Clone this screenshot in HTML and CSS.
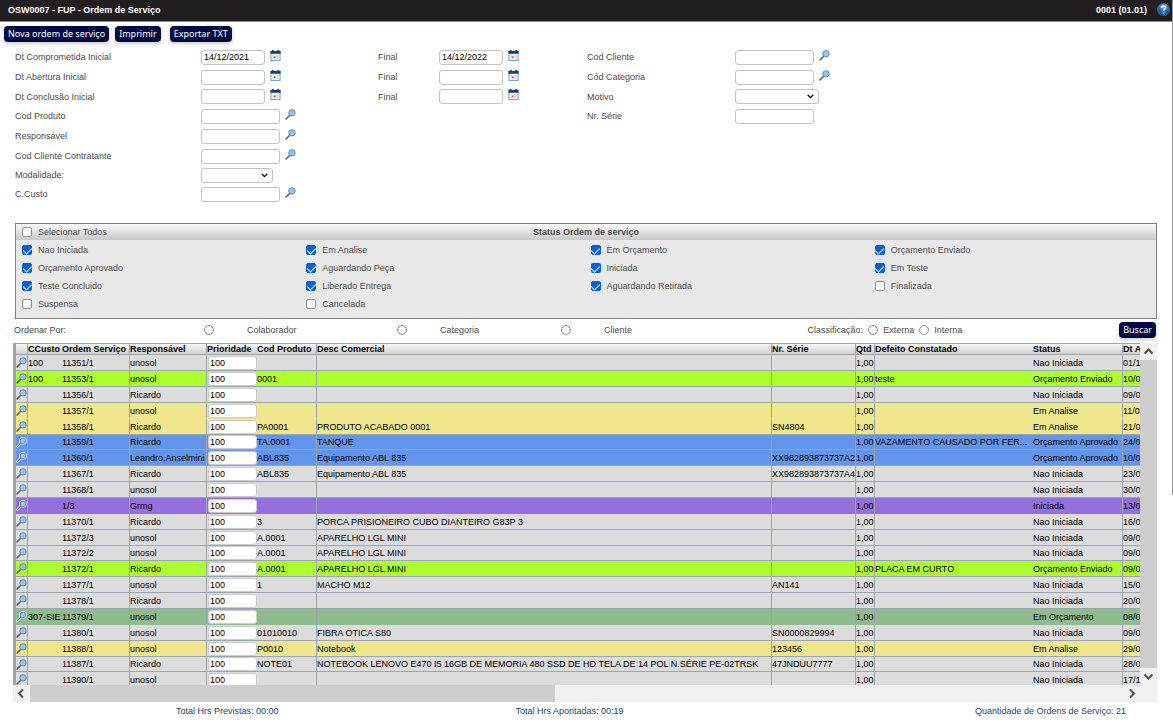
FILE: index.html
```html
<!DOCTYPE html>
<html lang="pt-BR">
<head>
<meta charset="utf-8">
<title>OSW0007 - FUP - Ordem de Serviço</title>
<link rel="stylesheet" href="styles.css">
</head>
<body>
<svg class="sprite" aria-hidden="true">
  <symbol id="lens" viewBox="0 0 12 12">
    <path d="M1.2 10.8 5.2 6.8" stroke="#6b6b5c" stroke-width="1.8" stroke-linecap="round"/>
    <circle cx="7.6" cy="4.2" r="3.5" fill="#8fc4ff" stroke="#6a7f98" stroke-width="1"/>
  </symbol>
  <symbol id="lens-halo" viewBox="0 0 12 12">
    <path d="M1.4 10.6 5.2 6.8" stroke="#e4e4dc" stroke-width="2.6" stroke-linecap="round"/>
    <circle cx="7.6" cy="4.2" r="4.1" fill="#dfe6ec"/>
    <path d="M1.4 10.6 5.2 6.8" stroke="#77776c" stroke-width="1.2"/>
    <circle cx="7.6" cy="4.2" r="3.1" fill="#8fc4ff" stroke="#6a7f98" stroke-width=".8"/>
  </symbol>
  <symbol id="calendar" viewBox="0 0 12 12">
    <rect x="1" y="1.5" width="10" height="10" fill="#eaf2f4" stroke="#6e9cc8"/>
    <path d="M.5 1h11v3H.5zM2 0h2v2H2zM8 0h2v2H8z" fill="#173f77"/>
    <path d="M4 7h2v2H4z" fill="#ee3b3b"/>
    <path d="M6.5 5.5h3v4h-3z" fill="#d5e5e4"/>
  </symbol>
</svg>

<header class="topbar">
  <h1>OSW0007 - FUP - Ordem de Serviço</h1>
  <span class="version">0001 (01.01)</span>
  <button class="help" type="button" aria-label="Ajuda">
    <svg viewBox="0 0 13 13"><defs><radialGradient id="g" cx=".5" cy=".25" r=".8"><stop offset="0" stop-color="#6fb0ee"/><stop offset=".6" stop-color="#1c61b8"/><stop offset="1" stop-color="#0c3f8c"/></radialGradient></defs><circle cx="6.5" cy="6.5" r="6" fill="url(#g)" stroke="#3f7fc8" stroke-width=".6"/><path d="M4.6 5c0-2.6 4-2.5 4-.3 0 1.4-2 1.5-2 3M6.6 9v1.5" fill="none" stroke="#fff" stroke-width="1.5"/></svg>
  </button>
</header>

<main class="page">
  <div class="toolbar">
    <button class="btn" type="button">Nova ordem de serviço</button>
    <button class="btn" type="button">Imprimir</button>
    <button class="btn btn-apart" type="button">Exportar TXT</button>
  </div>

  <form class="filters">
    <div class="filter-col">
      <div class="field"><label for="f1">Dt Comprometida Inicial</label><input class="box date" id="f1" value="14/12/2021"><svg class="ico"><use href="#calendar"/></svg></div>
      <div class="field"><label for="f2">Dt Abertura Inicial</label><input class="box date" id="f2"><svg class="ico"><use href="#calendar"/></svg></div>
      <div class="field"><label for="f3">Dt Conclusão Inicial</label><input class="box date" id="f3"><svg class="ico"><use href="#calendar"/></svg></div>
      <div class="field"><label for="f4">Cod Produto</label><input class="box" id="f4"><svg class="ico"><use href="#lens"/></svg></div>
      <div class="field"><label for="f5">Responsável</label><input class="box" id="f5"><svg class="ico"><use href="#lens"/></svg></div>
      <div class="field"><label for="f6">Cod Cliente Contratante</label><input class="box" id="f6"><svg class="ico"><use href="#lens"/></svg></div>
      <div class="field field-low"><label for="f7">Modalidade:</label><select class="box sel-short" id="f7"><option></option></select></div>
      <div class="field"><label for="f8">C.Custo</label><input class="box" id="f8"><svg class="ico"><use href="#lens"/></svg></div>
    </div>
    <div class="filter-col filter-end">
      <div class="field"><label for="e1">Final</label><input class="box date" id="e1" value="14/12/2022"><svg class="ico"><use href="#calendar"/></svg></div>
      <div class="field"><label for="e2">Final</label><input class="box date" id="e2"><svg class="ico"><use href="#calendar"/></svg></div>
      <div class="field"><label for="e3">Final</label><input class="box date" id="e3"><svg class="ico"><use href="#calendar"/></svg></div>
    </div>
    <div class="filter-col filter-client">
      <div class="field"><label for="c1">Cod Cliente</label><input class="box" id="c1"><svg class="ico"><use href="#lens"/></svg></div>
      <div class="field"><label for="c2">Cód Categoria</label><input class="box" id="c2"><svg class="ico"><use href="#lens"/></svg></div>
      <div class="field"><label for="c3">Motivo</label><select class="box sel-long" id="c3"><option></option></select></div>
      <div class="field"><label for="c4">Nr. Série</label><input class="box" id="c4"></div>
    </div>
  </form>

  <section class="status">
    <div class="status-head">
      <label class="check"><input type="checkbox">Selecionar Todos</label>
      <h2>Status Ordem de serviço</h2>
    </div>
    <div class="status-grid">
      <label class="check"><input type="checkbox" checked>Nao Iniciada</label>
      <label class="check"><input type="checkbox" checked>Em Analise</label>
      <label class="check"><input type="checkbox" checked>Em Orçamento</label>
      <label class="check"><input type="checkbox" checked>Orçamento Enviado</label>
      <label class="check"><input type="checkbox" checked>Orçamento Aprovado</label>
      <label class="check"><input type="checkbox" checked>Aguardando Peça</label>
      <label class="check"><input type="checkbox" checked>Iniciada</label>
      <label class="check"><input type="checkbox" checked>Em Teste</label>
      <label class="check"><input type="checkbox" checked>Teste Concluido</label>
      <label class="check"><input type="checkbox" checked>Liberado Entrega</label>
      <label class="check"><input type="checkbox" checked>Aguardando Retirada</label>
      <label class="check"><input type="checkbox">Finalizada</label>
      <label class="check"><input type="checkbox">Suspensa</label>
      <label class="check"><input type="checkbox">Cancelada</label>
    </div>
  </section>

  <div class="order">
    <span class="order-title">Ordenar Por:</span>
    <label class="order-opt order-first"><input type="radio" name="ord">Colaborador</label>
    <label class="order-opt order-mid"><input type="radio" name="ord">Categoria</label>
    <label class="order-opt"><input type="radio" name="ord">Cliente</label>
    <div class="class-opts">
      <span>Classificação:</span>
      <label><input type="radio" name="cls">Externa</label>
      <label><input type="radio" name="cls">Interna</label>
    </div>
    <button class="btn" type="button">Buscar</button>
  </div>

  <section class="grid">
    <div class="viewport">
      <table class="orders">
        <colgroup><col class="w-ico"><col class="w-cc"><col class="w-os"><col class="w-resp"><col class="w-pri"><col class="w-cod"><col class="w-desc"><col class="w-ns"><col class="w-qtd"><col class="w-def"><col class="w-st"><col class="w-dt"></colgroup>
        <thead><tr><th></th><th>CCusto</th><th>Ordem Serviço</th><th>Responsável</th><th>Prioridade</th><th>Cod Produto</th><th>Desc Comercial</th><th>Nr. Série</th><th>Qtd</th><th>Defeito Constatado</th><th>Status</th><th>Dt A</th></tr></thead>
        <tbody>
          <tr><td><svg><use href="#lens"/></svg></td><td>100</td><td>11351/1</td><td>unosol</td><td><input aria-label="Prioridade" value="100"></td><td></td><td></td><td></td><td>1,00</td><td></td><td>Nao Iniciada</td><td>01/1</td></tr>
          <tr class="sent"><td><svg><use href="#lens"/></svg></td><td>100</td><td>11353/1</td><td>unosol</td><td><input aria-label="Prioridade" value="100"></td><td>0001</td><td></td><td></td><td>1,00</td><td>teste</td><td>Orçamento Enviado</td><td>10/0</td></tr>
          <tr><td><svg><use href="#lens"/></svg></td><td></td><td>11356/1</td><td>Ricardo</td><td><input aria-label="Prioridade" value="100"></td><td></td><td></td><td></td><td>1,00</td><td></td><td>Nao Iniciada</td><td>09/0</td></tr>
          <tr class="analysis joined"><td><svg><use href="#lens"/></svg></td><td></td><td>11357/1</td><td>unosol</td><td><input aria-label="Prioridade" value="100"></td><td></td><td></td><td></td><td>1,00</td><td></td><td>Em Analise</td><td>11/0</td></tr>
          <tr class="analysis"><td><svg><use href="#lens"/></svg></td><td></td><td>11358/1</td><td>Ricardo</td><td><input aria-label="Prioridade" value="100"></td><td>PA0001</td><td>PRODUTO ACABADO 0001</td><td>SN4804</td><td>1,00</td><td></td><td>Em Analise</td><td>21/0</td></tr>
          <tr class="approved"><td><svg><use href="#lens-halo"/></svg></td><td></td><td>11359/1</td><td>Ricardo</td><td><input aria-label="Prioridade" value="100"></td><td>TA.0001</td><td>TANQUE</td><td></td><td>1,00</td><td>VAZAMENTO CAUSADO POR FER...</td><td>Orçamento Aprovado</td><td>24/0</td></tr>
          <tr class="approved"><td><svg><use href="#lens-halo"/></svg></td><td></td><td>11360/1</td><td>Leandro.Anselmini</td><td><input aria-label="Prioridade" value="100"></td><td>ABL835</td><td>Equipamento ABL 835</td><td>XX982893873737A2</td><td>1,00</td><td></td><td>Orçamento Aprovado</td><td>10/0</td></tr>
          <tr><td><svg><use href="#lens"/></svg></td><td></td><td>11367/1</td><td>Ricardo</td><td><input aria-label="Prioridade" value="100"></td><td>ABL835</td><td>Equipamento ABL 835</td><td>XX982893873737A4</td><td>1,00</td><td></td><td>Nao Iniciada</td><td>23/0</td></tr>
          <tr><td><svg><use href="#lens"/></svg></td><td></td><td>11368/1</td><td>unosol</td><td><input aria-label="Prioridade" value="100"></td><td></td><td></td><td></td><td>1,00</td><td></td><td>Nao Iniciada</td><td>30/0</td></tr>
          <tr class="started joined"><td><svg><use href="#lens-halo"/></svg></td><td></td><td>1/3</td><td>Grmg</td><td><input aria-label="Prioridade" value="100"></td><td></td><td></td><td></td><td>1,00</td><td></td><td>Iniciada</td><td>13/0</td></tr>
          <tr><td><svg><use href="#lens"/></svg></td><td></td><td>11370/1</td><td>Ricardo</td><td><input aria-label="Prioridade" value="100"></td><td>3</td><td>PORCA PRISIONEIRO CUBO DIANTEIRO G83P 3</td><td></td><td>1,00</td><td></td><td>Nao Iniciada</td><td>16/0</td></tr>
          <tr><td><svg><use href="#lens"/></svg></td><td></td><td>11372/3</td><td>unosol</td><td><input aria-label="Prioridade" value="100"></td><td>A.0001</td><td>APARELHO LGL MINI</td><td></td><td>1,00</td><td></td><td>Nao Iniciada</td><td>09/0</td></tr>
          <tr><td><svg><use href="#lens"/></svg></td><td></td><td>11372/2</td><td>unosol</td><td><input aria-label="Prioridade" value="100"></td><td>A.0001</td><td>APARELHO LGL MINI</td><td></td><td>1,00</td><td></td><td>Nao Iniciada</td><td>09/0</td></tr>
          <tr class="sent"><td><svg><use href="#lens"/></svg></td><td></td><td>11372/1</td><td>Ricardo</td><td><input aria-label="Prioridade" value="100"></td><td>A.0001</td><td>APARELHO LGL MINI</td><td></td><td>1,00</td><td>PLACA EM CURTO</td><td>Orçamento Enviado</td><td>09/0</td></tr>
          <tr><td><svg><use href="#lens"/></svg></td><td></td><td>11377/1</td><td>unosol</td><td><input aria-label="Prioridade" value="100"></td><td>1</td><td>MACHO M12</td><td>AN141</td><td>1,00</td><td></td><td>Nao Iniciada</td><td>15/0</td></tr>
          <tr><td><svg><use href="#lens"/></svg></td><td></td><td>11378/1</td><td>Ricardo</td><td><input aria-label="Prioridade" value="100"></td><td></td><td></td><td></td><td>1,00</td><td></td><td>Nao Iniciada</td><td>20/0</td></tr>
          <tr class="quote joined"><td><svg><use href="#lens-halo"/></svg></td><td>307-SIE</td><td>11379/1</td><td>unosol</td><td><input aria-label="Prioridade" value="100"></td><td></td><td></td><td></td><td>1,00</td><td></td><td>Em Orçamento</td><td>08/0</td></tr>
          <tr><td><svg><use href="#lens"/></svg></td><td></td><td>11380/1</td><td>unosol</td><td><input aria-label="Prioridade" value="100"></td><td>01010010</td><td>FIBRA OTICA S80</td><td>SN0000829994</td><td>1,00</td><td></td><td>Nao Iniciada</td><td>09/0</td></tr>
          <tr class="analysis"><td><svg><use href="#lens"/></svg></td><td></td><td>11388/1</td><td>unosol</td><td><input aria-label="Prioridade" value="100"></td><td>P0010</td><td>Notebook</td><td>123456</td><td>1,00</td><td></td><td>Em Analise</td><td>29/0</td></tr>
          <tr><td><svg><use href="#lens"/></svg></td><td></td><td>11387/1</td><td>Ricardo</td><td><input aria-label="Prioridade" value="100"></td><td>NOTE01</td><td>NOTEBOOK LENOVO E470 I5 16GB DE MEMORIA 480 SSD DE HD TELA DE 14 POL N.SÉRIE PE-02TRSK</td><td>47JNDUU7777</td><td>1,00</td><td></td><td>Nao Iniciada</td><td>28/0</td></tr>
          <tr><td><svg><use href="#lens"/></svg></td><td></td><td>11390/1</td><td>unosol</td><td><input aria-label="Prioridade" value="100"></td><td></td><td></td><td></td><td>1,00</td><td></td><td>Nao Iniciada</td><td>17/1</td></tr>
        </tbody>
      </table>
    </div>
    <div class="bar bar-v">
      <button type="button" aria-label="Subir"><svg viewBox="0 0 17 17"><path d="M4.5 10.5 8.5 6.5l4 4"/></svg></button>
      <div class="thumb"></div>
      <button type="button" aria-label="Descer"><svg viewBox="0 0 17 17"><path d="M4.5 6.5 8.5 10.5l4-4"/></svg></button>
    </div>
    <div class="bar bar-h">
      <button type="button" aria-label="Esquerda"><svg viewBox="0 0 17 17"><path d="M10 4.5 6 8.5l4 4"/></svg></button>
      <div class="track"><div class="thumb"></div></div>
      <button type="button" aria-label="Direita"><svg viewBox="0 0 17 17"><path d="M7 4.5 11 8.5l-4 4"/></svg></button>
    </div>
  </section>

  <footer class="totals">
    <span>Total Hrs Previstas: 00:00</span>
    <span>Total Hrs Apontadas: 00:19</span>
    <span>Quantidade de Ordens de Serviço: 21</span>
  </footer>
</main>
</body>
</html>
```

FILE: styles.css
```css
* { box-sizing: border-box; }

body {
  margin: 0;
  background: #fff linear-gradient(#999, #999) right top / 1px 68vh no-repeat;
  color: #4c4c4c;
  font: 9px/12px "Liberation Sans", Arial, sans-serif;
}

input, select, button { font: inherit; margin: 0; }
.sprite { display: none; }

.topbar {
  display: flex;
  align-items: center;
  height: 22px;
  margin-right: 1px;
  padding: 0 2px 2px 8px;
  background: #231f20;
  border-bottom: 1px solid #8c8c8c;
  color: #fff;
  font-weight: bold;
}
.topbar h1 { flex: 1; margin: 0; font-size: 9px; }
.help { width: 13px; height: 13px; margin-left: 10px; padding: 0; border: 0; background: none; }
.help svg { display: block; }

.page { padding: 4px 16px 0 13px; }

.toolbar { display: flex; gap: 6px; margin-left: -9px; }
.btn {
  height: 16px;
  padding: 0 4px;
  border: 0;
  border-radius: 4px;
  background: #000b44;
  color: #fff;
  box-shadow: 0 2px 4px #0003;
  font: 9px/16px "Noto Sans", "Open Sans", sans-serif;
  white-space: nowrap;
}
.btn-apart { margin-left: 3px; }

.filters { display: flex; padding: 5px 0 0 2px; }
.field { display: flex; align-items: center; height: 20px; }
.field:nth-child(3) { height: 19px; }
.field-low { height: 18px; }
.filter-col { width: 363px; }
.filter-col label { width: 186px; }
.filter-end { width: 209px; }
.filter-end label { width: 61px; }
.filter-client { width: auto; }
.filter-client label { width: 148px; }
.box {
  width: 79px;
  height: 15px;
  padding: 0 2px;
  border: 1px solid #c3c3c3;
  border-radius: 3px;
  background: #fff;
  color: #000;
}
.date { width: 64px; }
select.box {
  appearance: none;
  background: #fff url("data:image/svg+xml,%3Csvg xmlns='http://www.w3.org/2000/svg' width='7' height='5'%3E%3Cpath d='M.7.8 3.5 3.6 6.3.8' fill='none' stroke='%23000' stroke-width='1.3'/%3E%3C/svg%3E") right 4px center no-repeat;
}
.sel-short { width: 72px; }
.sel-long { width: 84px; }
.ico { width: 11px; height: 11px; margin: 0 0 4px 5px; }

.status { margin: 19px 0 0 2px; border: 1px solid #7f7f7f; background: #e8e8e8; }
.status-head {
  display: grid;
  grid-template-columns: 1fr auto 1fr;
  height: 16px;
  padding: 0 6px;
  background: linear-gradient(#fafafa, #c8c8c8);
}
.status-head h2 { margin: 0; font-size: 9px; line-height: 16px; }
.status-head .check { padding: 0; }
.status-grid {
  display: grid;
  grid-template-columns: repeat(4, 1fr);
  grid-auto-rows: 18px;
  padding: 1px 3px 5px 0;
}
.check { display: flex; align-items: center; gap: 6px; padding-left: 6px; }

[type="checkbox"], [type="radio"] {
  appearance: none;
  display: grid;
  place-items: center;
  flex: none;
  width: 10px;
  height: 10px;
  border: 1px solid #8f8f9d;
  border-radius: 2px;
  background: #fff;
}
[type="radio"] { border-radius: 50%; }
[type="checkbox"]:checked { border-color: #0060df; background: #0060df; }
[type="checkbox"]:checked::after {
  content: "";
  width: 4px;
  height: 7px;
  margin-bottom: 2px;
  border: solid #fff;
  border-width: 0 1px 1px 0;
  transform: rotate(45deg);
}

.order { display: flex; align-items: center; height: 24px; padding: 0 1px 2px; }
.order-title { width: 190px; }
.order-opt { display: flex; align-items: center; gap: 33px; }
.order-first { width: 193px; }
.order-mid { width: 164px; }
.class-opts { display: flex; gap: 5px; margin-left: auto; margin-right: 157px; }
.class-opts label { display: flex; align-items: center; gap: 5px; }

.grid { display: grid; grid-template-columns: 1fr 17px; }
.viewport { overflow: hidden; height: 342px; border: solid #9ba5b0; border-width: 1px 0 0 3px; }
.orders { width: 1130px; table-layout: fixed; border-collapse: separate; border-spacing: 0; color: #000; }
.w-ico { width: 12px; } .w-cc { width: 34px; } .w-os { width: 68px; }
.w-resp { width: 77px; } .w-pri { width: 50px; } .w-cod { width: 60px; }
.w-desc { width: 455px; } .w-ns { width: 84px; } .w-qtd { width: 19px; }
.w-def { width: 158px; } .w-st { width: 90px; }
.orders th, .orders td { padding: 0; overflow: hidden; text-align: left; white-space: nowrap; border-right: 1px solid #9ba5b0; }
.orders th { height: 11px; line-height: 10px; border-bottom: 1px solid #9ba5b0; background: linear-gradient(#f8f8f8, #cfcfcf); }
.orders td { height: 16px; line-height: 14px; border-bottom: 1px solid #9ba5b0; background: #dcdcdc; }
.orders tr:nth-child(7n+6) td { height: 15px; }
.orders tr > :nth-child(2), .orders tr > :nth-child(5), .orders tr > :nth-child(10) { border-right: 0; }
.orders svg { display: block; width: 11px; height: 11px; }
.orders input { display: block; width: 49px; height: 14px; margin-left: 1px; padding: 0 1px; border: 1px solid #ccc; border-radius: 3px; background: #fff; }
.orders .sent td { background: #adff2f; }
.orders .analysis td { background: #f0e68c; }
.orders .approved td { background: #6495ed; }
.orders .started td { background: #9370db; }
.orders .quote td { background: #8fbc8f; }
.orders .joined td { border-bottom-color: transparent; }

.bar { display: flex; background: #f0f0f0; }
.bar button { flex: none; width: 17px; height: 17px; padding: 0; border: 0; background: #f0f0f0; }
.bar svg { display: block; fill: none; stroke: #505050; stroke-width: 2; }
.bar .thumb { background: #cdcdcd; }
.bar-v { flex-direction: column; }
.bar-v .thumb { flex: 1; }
.bar-h { grid-column: 1 / 3; padding-right: 17px; }
.track { flex: 1; }
.bar-h .thumb { width: 48%; height: 17px; }

.totals { display: flex; padding: 3px 31px 4px 163px; color: #1c456f; }
.totals span:nth-child(2) { margin-left: 237px; }
.totals span:last-child { margin-left: auto; }
```
